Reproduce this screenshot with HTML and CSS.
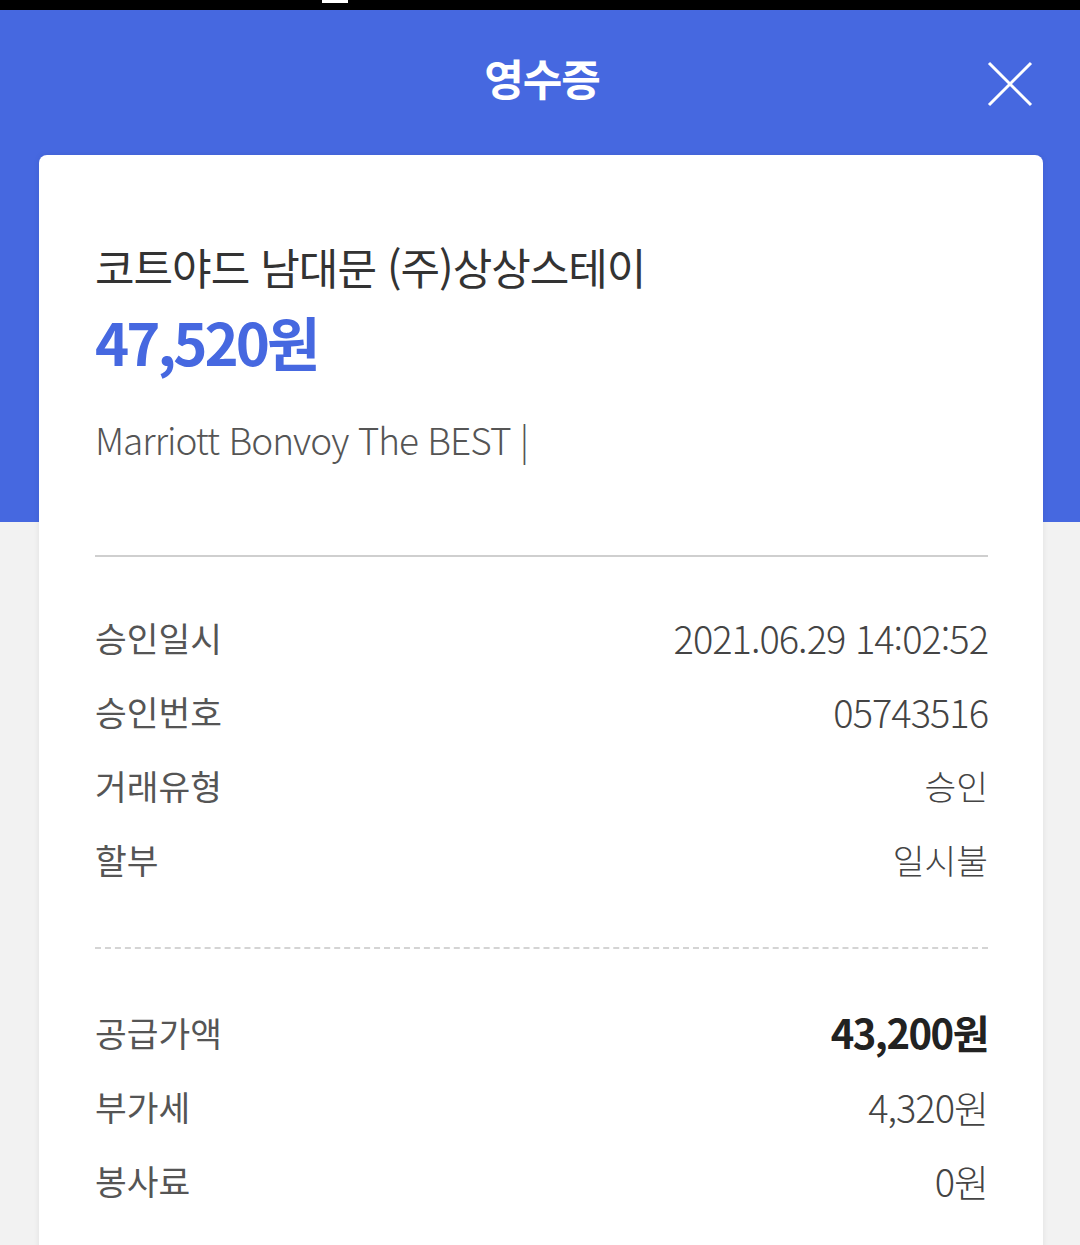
FILE: index.html
```html
<!DOCTYPE html>
<html lang="ko">
<head>
<meta charset="utf-8">
<title>영수증</title>
<link rel="stylesheet" href="styles.css">
</head>
<body>
<div class="statusbar"><span class="status-mark"></span></div>
<div class="page">
  <header class="topbar">
    <span class="topbar-side"></span>
    <h1 class="title">영수증</h1>
    <button class="close" aria-label="닫기">
      <svg width="46" height="46" viewBox="0 0 46 46"><path d="M2 2 L44 44 M44 2 L2 44" stroke="#fff" stroke-width="3" fill="none"/></svg>
    </button>
  </header>
  <main class="card">
    <section class="summary">
      <div class="merchant">코트야드 남대문 (주)상상스테이</div>
      <div class="total">47,520원</div>
      <div class="cardname">Marriott Bonvoy The BEST |</div>
    </section>
    <hr class="solid">
    <section class="rows">
      <div class="row"><span class="label">승인일시</span><span class="value">2021.06.29 14:02:52</span></div>
      <div class="row"><span class="label">승인번호</span><span class="value">05743516</span></div>
      <div class="row"><span class="label">거래유형</span><span class="value ko">승인</span></div>
      <div class="row"><span class="label">할부</span><span class="value ko">일시불</span></div>
    </section>
    <hr class="dashed">
    <section class="rows rows-amount">
      <div class="row"><span class="label">공급가액</span><span class="value strong">43,200원</span></div>
      <div class="row"><span class="label">부가세</span><span class="value">4,320원</span></div>
      <div class="row"><span class="label">봉사료</span><span class="value">0원</span></div>
    </section>
  </main>
</div>
</body>
</html>
```
FILE: styles.css
```css
* { box-sizing: border-box; }
html, body { margin: 0; padding: 0; }
body {
  width: 1080px;
  height: 1245px;
  overflow: hidden;
  font-family: "Noto Sans CJK KR", "Noto Sans", sans-serif;
  background: #f2f2f2;
}
.statusbar {
  height: 10px;
  background: #000;
  position: relative;
}
.status-mark {
  position: absolute;
  left: 322px;
  top: 0;
  width: 26px;
  height: 3px;
  background: #fff;
}
.page {
  background: linear-gradient(to bottom, #4668e0 0, #4668e0 512px, #f2f2f2 512px);
  height: 1235px;
  padding: 0 37px 0 39px;
  overflow: hidden;
}
.topbar {
  height: 145px;
  display: flex;
  align-items: center;
  justify-content: space-between;
}
.topbar-side { width: 46px; }
.title {
  margin: 0;
  color: #fff;
  font-size: 43px;
  font-weight: 700;
  letter-spacing: -1px;
  padding-left: 12px;
  padding-bottom: 12px;
}
.close {
  background: none;
  border: 0;
  padding: 0;
  margin-right: 10px;
  margin-top: 2px;
  width: 46px;
  height: 46px;
}
.card {
  background: #fff;
  border-radius: 8px;
  height: 1200px;
  padding: 0 55px 0 56px;
  box-shadow: 0 0 6px rgba(0,0,0,0.08);
}
.summary {
  padding-top: 78px;
  padding-bottom: 90px;
}
.merchant {
  font-size: 43px;
  color: #333;
  letter-spacing: -1px;
  line-height: 66px;
  font-weight: 400;
}
.total {
  font-size: 58px;
  font-weight: 700;
  color: #4668e0;
  letter-spacing: -3px;
  line-height: 84px;
}
.cardname {
  margin-top: 30px;
  font-size: 37px;
  color: #555;
  letter-spacing: -1px;
  line-height: 52px;
  font-weight: 300;
}
hr.solid {
  margin: 0;
  border: 0;
  border-top: 2px solid #cfcfcf;
}
hr.dashed {
  margin: 0;
  border: 0;
  border-top: 2px dashed #d4d4d4;
}
.rows {
  padding: 43px 0 51px;
  display: flex;
  flex-direction: column;
}
.rows-amount { padding-top: 46px; }
.row {
  display: flex;
  justify-content: space-between;
  align-items: center;
  height: 74px;
}
.label {
  font-size: 34.5px;
  color: #555;
  font-weight: 400;
}
.value {
  font-size: 38px;
  color: #444;
  font-weight: 300;
  letter-spacing: -1px;
}
.value.ko {
  font-size: 34.5px;
  letter-spacing: 0;
}
.value.strong {
  font-weight: 700;
  color: #222;
  font-size: 40px;
  letter-spacing: -1.5px;
}
```
